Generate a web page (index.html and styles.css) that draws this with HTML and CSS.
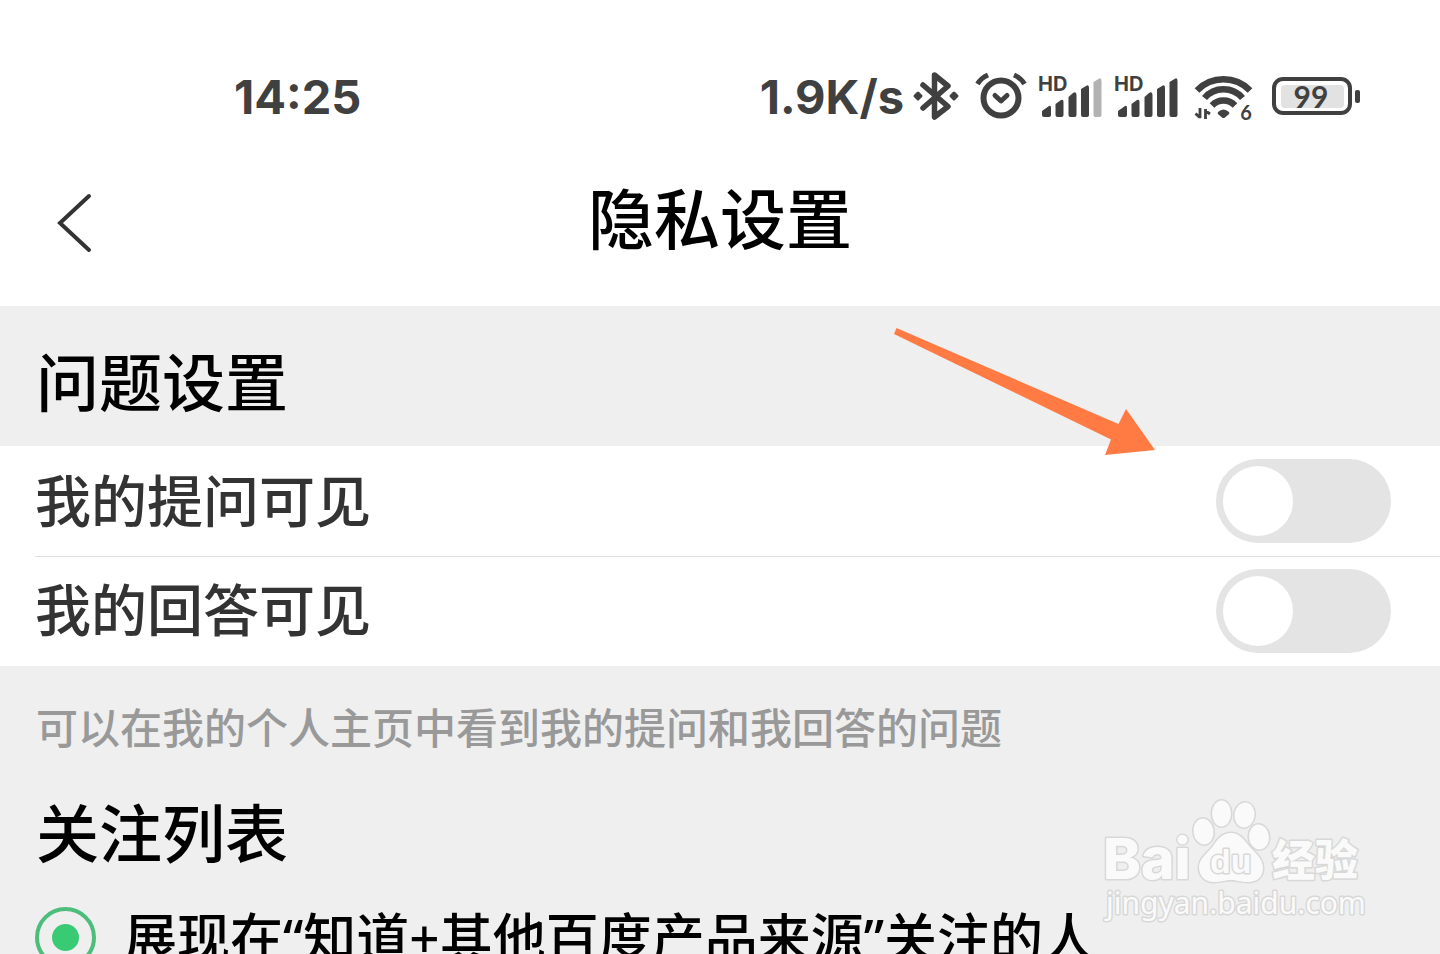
FILE: index.html
```html
<!DOCTYPE html>
<html lang="zh-CN">
<head>
<meta charset="utf-8">
<meta name="viewport" content="width=device-width, initial-scale=1">
<title>隐私设置</title>
<link rel="stylesheet" href="styles.css">
</head>
<body>
<div class="status-bar">
  <time class="clock">14:25</time>
  <div class="indicators">
    <span class="speed">1.9K/s</span>
    <svg class="icon" width="54" height="54" viewBox="-4 0 54 54" aria-hidden="true">
      <path class="line" stroke-width="5.500" d="M10 15 35 36.500 21.500 47V5L35 16 10 38"/>
      <path class="round" d="M5 23 8 26 5 29 2 26zM41 23 44 26 41 29 38 26z"/>
    </svg>
    <svg class="icon" width="50" height="54" viewBox="0 0 50 54" aria-hidden="true">
      <circle class="line" stroke-width="6" cx="25" cy="28" r="17.500"/>
      <path class="line" stroke-width="5" d="m19 25.500 6 5.500 6-5.500"/>
      <path class="arc" stroke-width="5" d="M1.500 14Q5 8 12 5M48.500 14Q45 8 38 5"/>
    </svg>
    <svg class="icon" width="63" height="54" viewBox="0 0 63 54" aria-hidden="true">
      <text class="hd" x="-1" y="21">HD</text>
      <path class="solid" d="M3 41 10 36Q12 35 12 38V45Q12 47 10 47H5Q3 47 3 45zM16.500 34 22 30Q24.500 29 24.500 32V45Q24.500 47 22.500 47H18.500Q16.500 47 16.500 45zM29.500 27 34 23Q37.500 21 37.500 25V45Q37.500 47 35.500 47H31.500Q29.500 47 29.500 45zM42 19 47 16Q50 14 50 18V45Q50 47 48 47H44Q42 47 42 45z"/>
      <path class="faint" d="M54.500 12 59.500 9Q62.500 7 62.500 11V45Q62.500 47 60.500 47H56.500Q54.500 47 54.500 45z"/>
    </svg>
    <svg class="icon" width="66" height="54" viewBox="0 0 66 54" aria-hidden="true">
      <text class="hd" x="-1" y="21">HD</text>
      <path class="solid" d="M3 41 10 36Q12 35 12 38V45Q12 47 10 47H5Q3 47 3 45zM16.500 34 22 30Q24.500 29 24.500 32V45Q24.500 47 22.500 47H18.500Q16.500 47 16.500 45zM29.500 27 34 23Q37.500 21 37.500 25V45Q37.500 47 35.500 47H31.500Q29.500 47 29.500 45zM42 19 47 16Q50 14 50 18V45Q50 47 48 47H44Q42 47 42 45zM54.500 12 59.500 9Q62.500 7 62.500 11V45Q62.500 47 60.500 47H56.500Q54.500 47 54.500 45z"/>
    </svg>
    <svg class="icon" width="65" height="54" viewBox="0 0 65 54" aria-hidden="true">
      <path class="arc" stroke-width="6.500" d="M3 20.500A37 37 0 0 1 56 20.500M10.500 28A25 25 0 0 1 48.500 28M18 35.500A16 16 0 0 1 41 35.500"/>
      <path class="solid" d="M24 42Q29.500 37 35 42 36 43 34.500 44.500L31 47.500Q29.500 48.500 28 47.500L24.500 44.500Q23 43 24 42z"/>
      <path class="arc" stroke-width="2.800" d="M6 38V48M7 46.800H5L1.500 43.500M11.500 49V39M11 40.500 16 44"/>
      <text class="digit six" x="52" y="50">6</text>
    </svg>
    <svg class="icon" width="88" height="54" viewBox="0 0 88 54" role="img" aria-label="电量 99">
      <rect class="line" stroke-width="4" x="2" y="9" width="76" height="34" rx="9"/>
      <rect class="charge" x="9" y="15" width="63" height="23" rx="4"/>
      <rect class="solid" x="83" y="20" width="5" height="13" rx="2"/>
      <text class="digit" x="39" y="38">99</text>
    </svg>
  </div>
</div>

<header class="title-bar">
  <button class="back" type="button" aria-label="返回">
    <svg class="chevron" width="36" height="60" viewBox="0 0 36 60" aria-hidden="true"><path d="M33 3 4 30 33 57"/></svg>
  </button>
  <h1 class="title">隐私设置</h1>
</header>

<main class="settings">
  <h2 class="section-title">问题设置</h2>
  <div class="group">
    <label class="row"><span class="row-label">我的提问可见</span><input class="switch" type="checkbox" role="switch"></label>
    <label class="row"><span class="row-label">我的回答可见</span><input class="switch" type="checkbox" role="switch"></label>
  </div>
  <p class="note">可以在我的个人主页中看到我的提问和我回答的问题</p>
  <h2 class="section-title follow">关注列表</h2>
  <label class="option"><input class="radio" type="radio" name="follow" checked><span class="option-label">展现在“知道+其他百度产品来源”关注的人</span></label>
</main>

<svg class="pointer" width="264" height="130" viewBox="0 0 264 130" aria-hidden="true"><path d="M4.500 1 226.500 97 234 82 263 123 213 128 219 112.500 2 7z"/></svg>

<svg class="watermark" width="300" height="160" viewBox="0 0 300 160" role="img" aria-label="Baidu 经验">
  <text class="wm-bai" x="23" y="99">Bai</text>
  <ellipse cx="123.500" cy="51.500" rx="10" ry="13" transform="rotate(-8 123.500 51.500)"/>
  <ellipse cx="141.500" cy="33.500" rx="9.500" ry="13"/>
  <ellipse cx="164.500" cy="35" rx="10" ry="12.500" transform="rotate(8 164.500 35)"/>
  <ellipse cx="179" cy="57" rx="10" ry="12.500" transform="rotate(-6 179 57)"/>
  <path d="M151 53C160 53 165 61 169 66 174 72 183 78 183 88 183 97 177 102 168 102 160 102 157 100 151 100 145 100 142 102 134 102 125 102 119 96 119 87 119 78 129 72 133 66 137 60 142 53 151 53z"/>
  <text class="wm-du" x="130" y="93">du</text>
  <text class="wm-cn" x="192" y="96">经验</text>
  <text class="wm-url" x="26" y="134">jingyan.baidu.com</text>
</svg>
</body>
</html>
```
FILE: styles.css
```css
* {
  box-sizing: border-box;
}

body {
  position: relative;
  margin: 0;
  height: 100vh;
  overflow: hidden;
  background: #efefef;
  color: #000;
  font-family: "Noto Sans CJK SC", sans-serif;
  font-weight: 500;
}

.status-bar {
  display: flex;
  justify-content: space-between;
  align-items: center;
  padding: 70px 80px 16px 234px;
  background: #fff;
  color: #404040;
  font: 700 47px/54px Inter, sans-serif;
}

.indicators {
  display: flex;
  align-items: center;
  gap: 13px;
}

.speed {
  margin-right: -8px;
}

.icon {
  overflow: visible;
}

.solid {
  fill: #404040;
}

.round {
  fill: #404040;
  stroke: #404040;
  stroke-width: 3;
  stroke-linejoin: round;
}

.faint {
  fill: #b2b2b2;
}

.charge {
  fill: #e2e2e2;
}

.line,
.arc {
  fill: none;
  stroke: #404040;
}

.line {
  stroke-linecap: round;
  stroke-linejoin: round;
}

.hd {
  fill: #404040;
  font: 700 20px Inter, sans-serif;
}

.digit {
  fill: #404040;
  font: 700 30px Lato, sans-serif;
  text-anchor: middle;
}

.six {
  font-size: 20px;
}

.title-bar {
  display: grid;
  grid-template-columns: 1fr auto 1fr;
  align-items: center;
  padding: 27px 56px;
  background: #fff;
}

.back {
  justify-self: start;
  display: flex;
  padding: 18px 0;
  border: 0;
  background: none;
}

.chevron {
  fill: none;
  stroke: #333;
  stroke-width: 4;
  stroke-linecap: round;
}

.title {
  margin: 0;
  padding-bottom: 16px;
  font-size: 66px;
  font-weight: 500;
  line-height: 96px;
}

.section-title {
  margin: 0;
  padding: 25px 36px 19px;
  font-size: 63px;
  font-weight: 500;
  line-height: 96px;
}

.group {
  padding-left: 35px;
  background: #fff;
}

.row {
  display: flex;
  justify-content: space-between;
  align-items: center;
  height: 110px;
  padding-right: 49px;
  color: #333;
  font-size: 56px;
}

.row + .row {
  padding-bottom: 2px;
  border-top: 1px solid #e0e0e0;
}

.row-label {
  padding-bottom: 8px;
}

.switch {
  appearance: none;
  width: 175px;
  height: 84px;
  margin: 0;
  padding: 7px;
  border-radius: 42px;
  background: #e4e4e4;
}

.switch::before {
  content: "";
  display: block;
  width: 70px;
  height: 70px;
  border-radius: 50%;
  background: #fff;
}

.switch:checked {
  background: #38cb73;
}

.switch:checked::before {
  margin-left: auto;
}

.note {
  margin: 0;
  padding: 30px 36px 0;
  color: #999;
  font-size: 42px;
  line-height: 60px;
}

.follow {
  padding-top: 26px;
  padding-bottom: 18px;
}

.option {
  display: flex;
  align-items: center;
  gap: 28px;
  padding: 0 35px;
  font-family: "Noto Sans", "Noto Sans CJK SC", sans-serif;
  font-size: 53px;
  line-height: 80px;
  white-space: nowrap;
}

.option-label {
  padding-top: 2px;
}

.radio {
  appearance: none;
  display: grid;
  place-items: center;
  width: 61px;
  height: 61px;
  margin: 0;
  border: 4px solid #4dbd7c;
  border-radius: 50%;
}

.radio:checked::before {
  content: "";
  width: 27px;
  height: 27px;
  border-radius: 50%;
  background: #38cb73;
}

.pointer {
  position: absolute;
  top: 327px;
  left: 892px;
  fill: #ff7b43;
}

.watermark {
  position: absolute;
  right: 60px;
  bottom: 14px;
  fill: #fafafa;
  stroke: #d8d8d8;
  stroke-width: 3;
  stroke-linejoin: round;
  paint-order: stroke;
}

.wm-bai {
  font: 800 57px Inter, sans-serif;
}

.wm-du {
  font: 700 34px "Liberation Sans", sans-serif;
}

.wm-cn {
  font: 900 43px "Noto Sans CJK SC", sans-serif;
}

.wm-url {
  font: 400 30px "Noto Sans", sans-serif;
}
```
